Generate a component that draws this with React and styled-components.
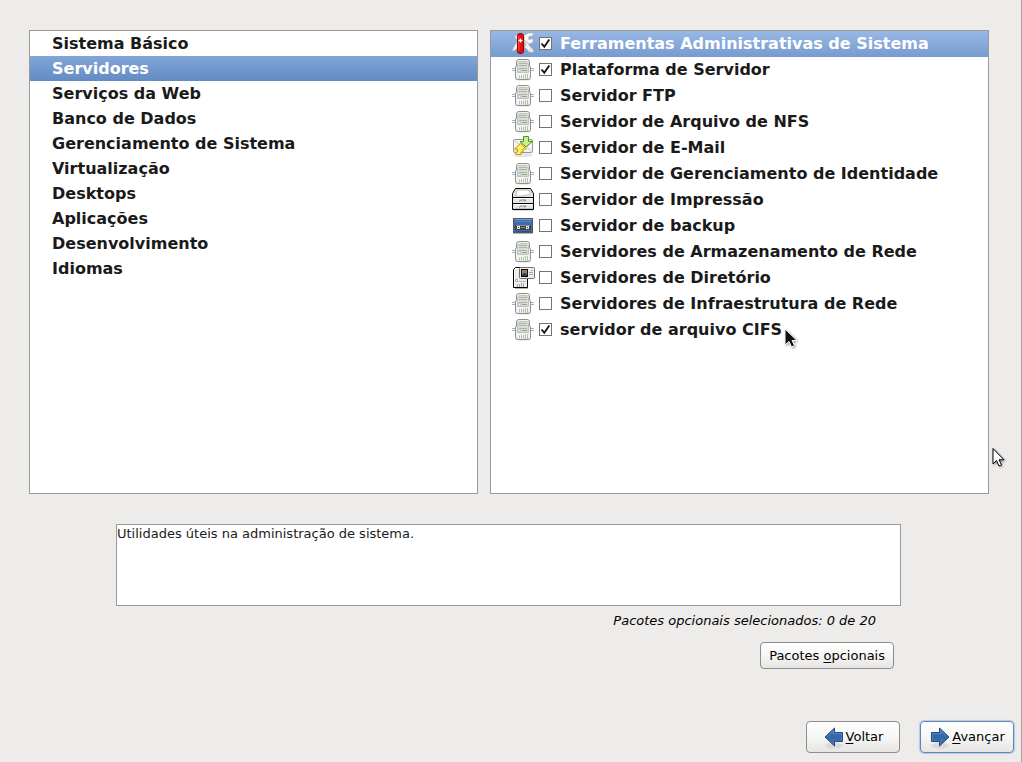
import React, { useState } from "react";
import styled, { createGlobalStyle, css } from "styled-components";

const categories = [
  "Sistema Básico",
  "Servidores",
  "Serviços da Web",
  "Banco de Dados",
  "Gerenciamento de Sistema",
  "Virtualização",
  "Desktops",
  "Aplicações",
  "Desenvolvimento",
  "Idiomas",
];

const groups = [
  { name: "Ferramentas Administrativas de Sistema", icon: "knife", on: true },
  { name: "Plataforma de Servidor", icon: "server", on: true },
  { name: "Servidor FTP", icon: "server" },
  { name: "Servidor de Arquivo de NFS", icon: "server" },
  { name: "Servidor de E-Mail", icon: "mail" },
  { name: "Servidor de Gerenciamento de Identidade", icon: "server" },
  { name: "Servidor de Impressão", icon: "printer" },
  { name: "Servidor de backup", icon: "tape" },
  { name: "Servidores de Armazenamento de Rede", icon: "server" },
  { name: "Servidores de Diretório", icon: "directory" },
  { name: "Servidores de Infraestrutura de Rede", icon: "server" },
  { name: "servidor de arquivo CIFS", icon: "server", on: true },
];

const ServerIcon = () => (
  <>
    <path d="M1 11.5h4M1 13.5h4M19 11.5h4M19 13.5h4" stroke="#8ab4e0" />
    <ellipse cx="12" cy="22.5" rx="8" ry="1" fill="#000" opacity=".15" />
    <path
      d="M8 2.500h8q2.500 0 2.500 2.500v4l1 1v10q0 2.500-2.500 2.500h-10q-2.500 0-2.500-2.500V10l1-1V5q0-2.500 2.500-2.500z"
      fill="#f3f3f1"
      stroke="#8f928c"
    />
    <path d="M8 4.500h8l1.500 2v9h-11v-9z" fill="#d8dcd4" stroke="#c0c4bb" />
    <path d="M8 6.500h8M8 8.500h8M8 11.500h8" stroke="#b0b4ab" />
    <path d="M11 13.500h5" stroke="#9a9e95" />
    <circle cx="8.500" cy="13.500" r="1.200" fill="#fff" stroke="#9a9d98" strokeWidth=".6" />
    <path d="M8.500 18.500v3M10.500 18v3.500M12.500 18v3.500M14.500 17v5M16.500 17v5" stroke="#b8bcb3" />
  </>
);

const KnifeIcon = () => (
  <>
    <path d="M7 9L3.500 15L1 20l3-1l4-3.500z" fill="#f0f2f0" stroke="#b7bec4" strokeWidth=".5" />
    <path d="M7 9.500L4 6.500L4.500 4l3 1.500z" fill="#f4f4f2" stroke="#a9b1b8" strokeWidth=".5" />
    <path
      d="M13 3.500h2l2-1.500h5l.5 2l-1.500 1l-3 .5l-.5 2.500l2 .5l1-1l2 1.500q0 2.500-3 3.500t-6.500 2z"
      fill="#fafaf7"
      stroke="#9aa3ad"
      strokeWidth=".6"
    />
    <path
      d="M13 9.500q4 1 5 4t3.500 3.500l1 2v2.500h-3q-3-.5-3.500-3l-3-2.500z"
      fill="#f1f1ed"
      stroke="#8f979f"
      strokeWidth=".6"
    />
    <path d="M13 11l2.500 1.500l-1 3L13 16z" fill="#b9bcb6" />
    <path d="M20 17v2M18.500 20h2" stroke="#c1c4be" strokeWidth=".8" />
    <rect x="6.500" y="2.500" width="6" height="20" rx="2.500" fill="#e01010" stroke="#9e0000" />
    <path d="M7.800 5v15" stroke="#ff6a5e" strokeWidth=".8" />
    <path d="M9.500 7.500v4M7.500 9.500h4" stroke="#fff" strokeWidth="1.300" />
  </>
);

const MailIcon = () => (
  <>
    <ellipse cx="12" cy="20" rx="10" ry="2.500" fill="#000" opacity=".1" />
    <rect x="2.500" y="4.500" width="19" height="13" rx="1" fill="#f6f6f4" stroke="#979a94" />
    <path d="M3 5l9 7l9-7M3 17l6-6M21 17l-6-6" fill="none" stroke="#c6c8c2" />
    <path
      d="M12.500 1.500h5v5h4l-6.500 5.500l-6-5.500h3.500z"
      fill="#c5f08f"
      stroke="#4e9a06"
    />
    <path
      d="M9.500 8.500l6 5.500h-3.500v3h-2v2.500h-5v-2.500h1.500v-3H3.500z"
      fill="#fdef6c"
      stroke="#c99a00"
    />
  </>
);

const PrinterIcon = () => (
  <>
    <path d="M4.500 1.500h15l3 5v16h-21v-16z" fill="#e4e4e2" stroke="#000" />
    <path d="M6 3h12l1.500 4q-1 1-3 1h-2.500l-2 1H4.500z" fill="#fff" stroke="#b0b0ad" strokeWidth=".8" />
    <path d="M2 10.500h20M2 16.500h20" stroke="#000" />
    <path d="M3 11.500h18M3 17.500h18" stroke="#fff" />
    <path d="M8 14.500l2-1.500h5l-2 1.500M8 20.500l2-1.500h5l-2 1.500" fill="none" stroke="#777" strokeWidth=".8" />
    <path d="M2 22.500h20" stroke="#000" strokeWidth="1.300" />
  </>
);

const TapeIcon = () => (
  <>
    <path d="M2 20.500h20" stroke="#000" opacity=".3" />
    <rect x="2.500" y="5.500" width="19" height="14" fill="#3f6cab" stroke="#53575b" />
    <path d="M3.500 6.500h17" stroke="#7fa3d3" />
    <path d="M4 8.500h16" stroke="#5582bf" />
    <path d="M4 18.500h16" stroke="#29508b" />
    <rect x="4" y="12" width="16" height="5" fill="#3a3f42" />
    <path d="M5 12.500h14" stroke="#8b8f92" />
    <path d="M10 14.500h4" stroke="#8b8f92" />
    <rect x="6" y="13" width="3" height="3" fill="#e6e8e4" />
    <rect x="15" y="13" width="3" height="3" fill="#e6e8e4" />
    <path d="M7.500 14v1M16.500 14v1" stroke="#34383b" />
  </>
);

const DirectoryIcon = () => (
  <>
    <path d="M4 23h13" stroke="#000" opacity=".3" strokeWidth="2" />
    <path d="M4.500 2.500h10l2 3v17h-14v-18z" fill="#ececE8" stroke="#000" />
    <path d="M3.500 5v17M4 3.500h5" stroke="#fff" />
    <path d="M6.500 19v3M8.500 19v3M10.500 18v4M12.500 18v4" stroke="#a5a8a0" />
    <path d="M8 16.500h7" stroke="#b3b5ae" />
    <circle cx="5.500" cy="15.500" r="1.200" fill="#fff" stroke="#777" strokeWidth=".7" />
    <rect x="8.500" y="2.500" width="15" height="11" rx="1" fill="#efede8" stroke="#75716d" />
    <rect x="10.500" y="4.500" width="6" height="7" fill="#8093ae" stroke="#0c0c0c" />
    <circle cx="13.500" cy="6.700" r="1.800" fill="#bd722c" />
    <path d="M11 11c0-2 1-3 2.500-3s2.500 1 2.500 3z" fill="#293b5b" />
    <path d="M20 5.500h2M18 7.500h4M18 9.500h4" stroke="#aaa79f" />
  </>
);

const icons = {
  server: ServerIcon,
  knife: KnifeIcon,
  mail: MailIcon,
  printer: PrinterIcon,
  tape: TapeIcon,
  directory: DirectoryIcon,
};

const GroupIcon = ({ name }) => {
  const Drawing = icons[name];
  return (
    <svg width="24" height="24" viewBox="0 0 24 24" fill="none" aria-hidden="true">
      <Drawing />
    </svg>
  );
};

const Arrow = ({ id, back }) => (
  <svg width="22" height="24" viewBox="0 0 22 24" aria-hidden="true">
    <defs>
      <linearGradient id={id} x1="0" y1="0" x2="0" y2="1">
        <stop offset="0" stopColor="#4b7cb8" />
        <stop offset=".5" stopColor="#3465a4" />
        <stop offset="1" stopColor="#4a7ab5" />
      </linearGradient>
    </defs>
    <ellipse cx="11" cy="20.500" rx="9" ry="3" fill="#000" opacity=".08" />
    <g transform={back ? "translate(22 0) scale(-1 1)" : undefined}>
      <path
        d="M2.500 7.500h8v-4.500l9.500 9l-9.500 9v-4.500h-8z"
        fill={`url(#${id})`}
        stroke="#204a87"
        strokeLinejoin="round"
      />
      <path d="M3.500 15.500V8.500h8V5.500l7 6.500" fill="none" stroke="#7fa5d3" opacity=".4" />
    </g>
  </svg>
);

const App = () => {
  const [category, setCategory] = useState("Servidores");
  const [checked, setChecked] = useState(groups.map((g) => !!g.on));
  const [current, setCurrent] = useState(0);

  const toggle = (i) => {
    setCurrent(i);
    setChecked(checked.map((c, n) => (n === i ? !c : c)));
  };

  return (
    <Page>
      <GlobalStyle />
      <Lists>
        <Panel>
          {categories.map((name) => (
            <li key={name}>
              <Category $active={name === category} onClick={() => setCategory(name)}>
                {name}
              </Category>
            </li>
          ))}
        </Panel>
        <Panel>
          {groups.map((group, i) => (
            <li key={group.name}>
              <Group $active={i === current}>
                <GroupIcon name={group.icon} />
                <CheckHolder>
                  <Check type="checkbox" checked={checked[i]} onChange={() => toggle(i)} />
                  {checked[i] && (
                    <svg width="13" height="13" viewBox="0 0 13 13" aria-hidden="true">
                      <path
                        d="M2.500 6.500l2.800 3.200l5-7.200"
                        fill="none"
                        stroke="#111"
                        strokeWidth="1.800"
                      />
                    </svg>
                  )}
                </CheckHolder>
                {group.name}
              </Group>
            </li>
          ))}
        </Panel>
      </Lists>

      <Details>
        <Description>Utilidades úteis na administração de sistema.</Description>
        <Summary>Pacotes opcionais selecionados: 0 de 20</Summary>
        <OptionalRow>
          <Button>
            <span>
              Pacotes <u>o</u>pcionais
            </span>
          </Button>
        </OptionalRow>
      </Details>

      <Footer>
        <NavButton>
          <Arrow id="back" back />
          <span>
            <u>V</u>oltar
          </span>
        </NavButton>
        <NavButton $primary>
          <Arrow id="next" />
          <span>
            <u>A</u>vançar
          </span>
        </NavButton>
      </Footer>

      <Pointer $x={784} $y={328} width="16" height="22" viewBox="0 0 16 22" aria-hidden="true">
        <path d="M1 1v16l4-3.500l2.500 5.500l3-1.500l-2.500-5h5z" fill="#111" stroke="#fff" />
      </Pointer>
      <Pointer $x={992} $y={447} width="16" height="22" viewBox="0 0 16 22" aria-hidden="true">
        <path d="M1 1.500v15.500l3.500-3.500l2.500 5.500l2.500-1.200l-2.500-5h5z" fill="#fff" stroke="#000" />
      </Pointer>
    </Page>
  );
};

export default App;

const GlobalStyle = createGlobalStyle`
  * {
    box-sizing: border-box;
  }
  body {
    margin: 0;
    background: #edeceb;
    color: #1a1a1a;
    font-family: "DejaVu Sans", sans-serif;
    font-size: 13px;
  }
`;

const Page = styled.main`
  position: relative;
  display: flex;
  flex-direction: column;
  min-height: 100vh;
  border-right: 1px solid #a5a29f;
`;

const Lists = styled.div`
  flex: 1;
  display: grid;
  grid-template-columns: 449fr 499fr;
  gap: 12px;
  padding: 30px 32px 0 29px;
`;

const Panel = styled.ul`
  margin: 0;
  padding: 0;
  list-style: none;
  background: white;
  border: 1px solid #9c9a97;
`;

const rowText = css`
  width: 100%;
  font-family: inherit;
  font-size: 16px;
  font-weight: bold;
  text-align: left;
  white-space: nowrap;
  color: ${(p) => (p.$active ? "white" : "#1a1a1a")};
`;

const Category = styled.button`
  ${rowText}
  display: block;
  height: 25px;
  padding: 0 22px;
  border: none;
  background: ${(p) => (p.$active ? "linear-gradient(#82a6d8, #638cc2)" : "none")};
`;

const Group = styled.label`
  ${rowText}
  display: flex;
  align-items: center;
  height: 26px;
  padding: 0 20px 2px;
  background: ${(p) => (p.$active ? "linear-gradient(#98b8e6, #779bce)" : "none")};
`;

const CheckHolder = styled.span`
  display: grid;
  margin: 0 8px 0 4px;

  > * {
    grid-area: 1 / 1;
  }
  svg {
    pointer-events: none;
  }
`;

const Check = styled.input`
  appearance: none;
  width: 13px;
  height: 13px;
  margin: 0;
  border: 1px solid #767472;
  background: white;
`;

const Details = styled.section`
  display: flex;
  flex-direction: column;
  margin: 30px 120px 0 116px;
`;

const Description = styled.div`
  height: 82px;
  line-height: 17px;
  background: white;
  border: 1px solid #9c9a97;
`;

const Summary = styled.div`
  margin: 6px 25px 0 0;
  line-height: 17px;
  text-align: right;
  font-style: italic;
  color: black;
`;

const OptionalRow = styled.div`
  display: flex;
  justify-content: flex-end;
  padding: 13px 7px 0 0;
`;

const Button = styled.button`
  display: flex;
  align-items: center;
  justify-content: center;
  height: 27px;
  padding: 0 8px 1px;
  border: 1px solid #8f8c89;
  border-radius: 4px;
  background: linear-gradient(#ffffff, #f6f6f5 50%, #e6e5e4);
  font: inherit;
  color: black;
  white-space: nowrap;

  u {
    text-underline-offset: 2px;
  }
`;

const NavButton = styled(Button)`
  gap: 1px;
  width: 94px;
  height: 32px;
  ${(p) =>
    p.$primary &&
    css`
      border-color: #6485b3;
      box-shadow: 0 0 1px 1px #b3cae8;
    `}
`;

const Footer = styled.footer`
  display: flex;
  justify-content: flex-end;
  gap: 20px;
  padding: 52px 7px 9px;
`;

const Pointer = styled.svg`
  position: absolute;
  left: ${(p) => p.$x}px;
  top: ${(p) => p.$y}px;
  pointer-events: none;
  filter: drop-shadow(1px 1px 1px rgba(0, 0, 0, 0.4));
`;
